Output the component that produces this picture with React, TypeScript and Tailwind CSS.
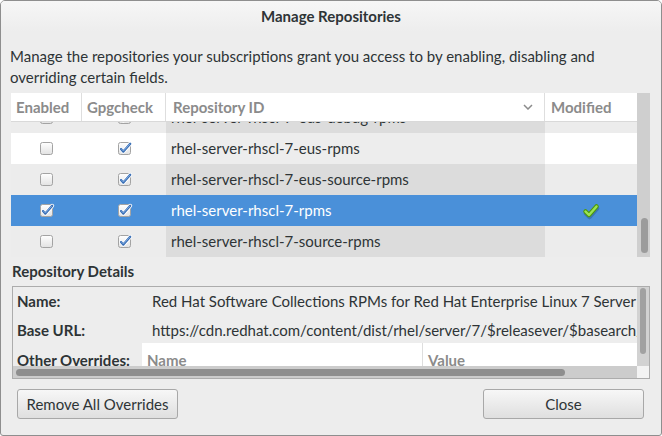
import React from "react";

type Row = { id: string; enabled: boolean; gpg: boolean; modified?: boolean; selected?: boolean; odd: boolean };

const rows: Row[] = [
  { id: "rhel-server-rhscl-7-eus-debug-rpms", enabled: false, gpg: true, odd: false },
  { id: "rhel-server-rhscl-7-eus-rpms", enabled: false, gpg: true, odd: true },
  { id: "rhel-server-rhscl-7-eus-source-rpms", enabled: false, gpg: true, odd: false },
  { id: "rhel-server-rhscl-7-rpms", enabled: true, gpg: true, modified: true, selected: true, odd: true },
  { id: "rhel-server-rhscl-7-source-rpms", enabled: false, gpg: true, odd: false },
];

function CheckBox({ checked }: { checked: boolean }) {
  return (
    <svg width="15" height="15" viewBox="0 0 15 15" className="block overflow-visible">
      <defs>
        <linearGradient id="cbg" x1="0" y1="0" x2="0" y2="1">
          <stop offset="0" stopColor="#ffffff" />
          <stop offset="1" stopColor="#e2e2e2" />
        </linearGradient>
      </defs>
      <rect x="1.5" y="1.5" width="12" height="12" rx="2" fill="url(#cbg)" stroke="#a3a3a3" />
      {checked && (
        <>
          <path d="M4 8 L6.4 10.6 L13.2 2.8" stroke="#ffffff" strokeWidth="4" fill="none" strokeLinecap="round" strokeLinejoin="round" />
          <path d="M4 8 L6.4 10.6 L13.2 2.8" stroke="#3a6fb5" strokeWidth="2.3" fill="none" strokeLinecap="round" strokeLinejoin="round" />
          <path d="M4.6 8.1 L6.4 10 L12.6 3.2" stroke="#8ab4e8" strokeWidth="0.8" fill="none" strokeLinecap="round" strokeLinejoin="round" />
        </>
      )}
    </svg>
  );
}

function GreenCheck() {
  return (
    <svg width="18" height="18" viewBox="0 0 18 18" className="block">
      <path d="M3.5 10 L7 13.5 L14.5 5" stroke="rgba(0,0,0,0.18)" strokeWidth="4.5" fill="none" strokeLinecap="round" strokeLinejoin="round" transform="translate(0.5 1.5)" />
      <path d="M3.5 9.5 L7 13 L14.5 4.5" stroke="#4e9a06" strokeWidth="4.5" fill="none" strokeLinecap="round" strokeLinejoin="round" />
      <path d="M3.5 9.5 L7 13 L14.5 4.5" stroke="#9be356" strokeWidth="2.4" fill="none" strokeLinecap="round" strokeLinejoin="round" />
    </svg>
  );
}

function TableRow({ r }: { r: Row }) {
  const base = r.selected ? "bg-[#4a90d9]" : r.odd ? "bg-white" : "bg-[#ececec]";
  const sorted = r.selected ? "bg-[#4a90d9]" : r.odd ? "bg-[#ededed]" : "bg-[#dcdcdc]";
  const text = r.selected ? "text-white" : "text-[#2e3436]";
  return (
    <div className="flex h-[31px] shrink-0">
      <div className={`w-[71px] flex items-center justify-center ${base}`}>
        <CheckBox checked={r.enabled} />
      </div>
      <div className={`w-[84px] flex items-center justify-center ${base}`}>
        <CheckBox checked={r.gpg} />
      </div>
      <div className={`w-[379px] flex items-center pl-[5px] whitespace-nowrap ${sorted} ${text}`}>{r.id}</div>
      <div className={`w-[92px] flex items-center justify-center ${base}`}>{r.modified && <GreenCheck />}</div>
    </div>
  );
}

export default function App() {
  return (
    <div className="w-[662px] h-[436px] bg-[#ededed] border border-[#8e8e8e] rounded-t-[5px] rounded-b-[3px] overflow-hidden flex flex-col text-[15px] text-[#2e3436] font-['Lato','Liberation_Sans',sans-serif]">
      {/* title bar */}
      <div className="h-[31px] shrink-0 flex items-center justify-center font-bold bg-gradient-to-b from-[#f6f6f6] to-[#ededed]">
        Manage Repositories
      </div>

      {/* description */}
      <div className="mt-[14px] pl-[9px] leading-[21px]">
        Manage the repositories your subscriptions grant you access to by enabling, disabling and
        <br />
        overriding certain fields.
      </div>

      {/* table */}
      <div className="mt-[5px] ml-[10px] mr-[11px] h-[164px] flex shrink-0">
        <div className="w-[626px] flex flex-col">
          <div className="h-[29px] shrink-0 flex bg-white border-b border-[#d9d9d9] font-bold text-[#8b8b8b]">
            <div className="w-[71px] flex items-center pl-[5px] border-r border-[#dedede]">Enabled</div>
            <div className="w-[84px] flex items-center pl-[5px] border-r border-[#dedede]">Gpgcheck</div>
            <div className="w-[379px] flex items-center justify-between pl-[7px] pr-[11px] border-r border-[#dedede]">
              <span>Repository ID</span>
              <svg width="10" height="6" viewBox="0 0 10 6" className="block">
                <path d="M1 1 L5 5 L9 1" stroke="#8b8b8b" strokeWidth="1.5" fill="none" />
              </svg>
            </div>
            <div className="w-[92px] flex items-center pl-[6px]">Modified</div>
          </div>
          <div className="flex-1 overflow-hidden">
            <div className="flex flex-col -mt-[20px]">
              {rows.map((r) => (
                <TableRow key={r.id} r={r} />
              ))}
            </div>
          </div>
        </div>
        <div className="w-[13px] bg-[#cfcfcf] flex flex-col items-center pt-[125px]">
          <div className="w-[7px] h-[35px] rounded-full bg-[#9c9c9c] ml-[1px]" />
        </div>
      </div>

      {/* details */}
      <div className="mt-[5px] pl-[11px] font-bold leading-[19px]">Repository Details</div>
      <div className="mt-[5px] ml-[11px] mr-[11px] h-[93px] shrink-0 border border-[#acacac] flex flex-col">
        <div className="flex h-[79px] shrink-0">
          <div className="flex-1 overflow-hidden flex flex-col pl-[4px]">
            <div className="flex h-[29px] shrink-0 items-center whitespace-nowrap">
              <div className="w-[125px] shrink-0 font-bold">Name:</div>
              <div className="pl-[10px]">Red Hat Software Collections RPMs for Red Hat Enterprise Linux 7 Server EUS</div>
            </div>
            <div className="flex h-[29px] shrink-0 items-center whitespace-nowrap">
              <div className="w-[125px] shrink-0 font-bold">Base URL:</div>
              <div className="pl-[10px]">https://cdn.redhat.com/content/dist/rhel/server/7/$releasever/$basearch/rhscl/1/os</div>
            </div>
            <div className="flex h-[34px] shrink-0 -mt-[2px] whitespace-nowrap">
              <div className="w-[125px] shrink-0 font-bold flex items-center">Other Overrides:</div>
              <div className="h-[34px] flex-1 bg-white flex font-bold text-[#8b8b8b]">
                <div className="w-[281px] shrink-0 flex items-center pl-[5px] border-r border-[#dedede]">Name</div>
                <div className="flex-1 flex items-center pl-[5px]">Value</div>
              </div>
            </div>
          </div>
          <div className="w-[12px] shrink-0 bg-[#d2d2d2] flex flex-col items-center pt-[1px]">
            <div className="w-[6px] h-[66px] rounded-full bg-[#a1a1a1]" />
          </div>
        </div>
        <div className="flex h-[12px] shrink-0">
          <div className="flex-1 bg-[#cccccc] flex items-center pl-[3px]">
            <div className="w-[549px] h-[7px] rounded-full bg-[#8e8e8e]" />
          </div>
          <div className="w-[12px] bg-[#f3f3f3]" />
        </div>
      </div>

      {/* buttons */}
      <div className="mt-[10px] pl-[16px] pr-[17px] flex justify-between">
        <button className="w-[161px] h-[30px] rounded-[3px] border border-[#a8a8a8] bg-gradient-to-b from-[#f7f7f7] to-[#dfdfdf] text-[#2e3436]">
          Remove All Overrides
        </button>
        <button className="w-[161px] h-[30px] rounded-[3px] border border-[#a8a8a8] bg-gradient-to-b from-[#f7f7f7] to-[#dfdfdf] text-[#2e3436]">
          Close
        </button>
      </div>
    </div>
  );
}
